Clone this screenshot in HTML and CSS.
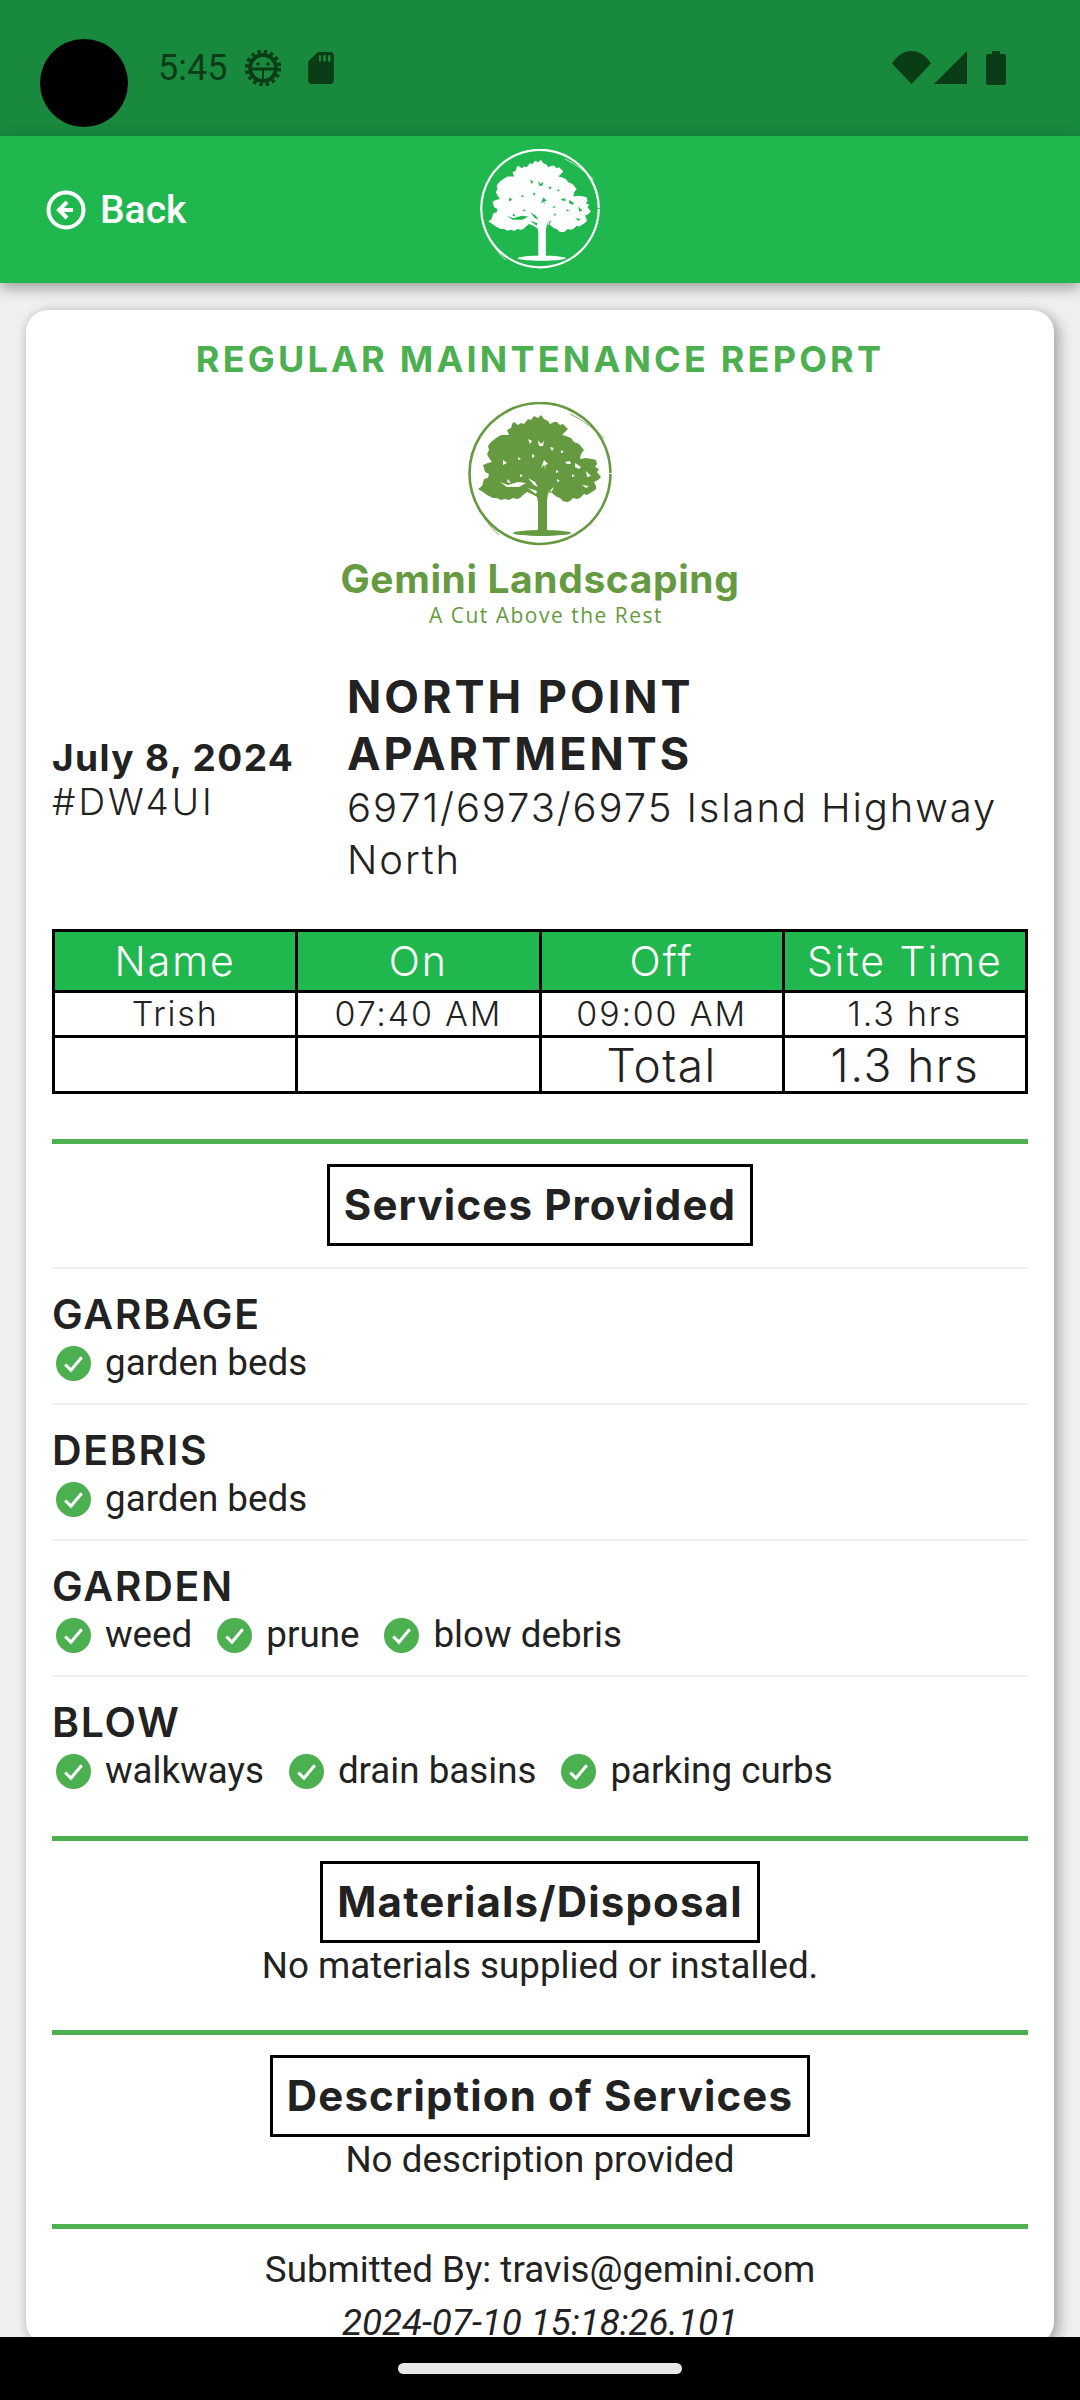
FILE: index.html
```html
<!DOCTYPE html>
<html lang="en">
<head>
    <meta charset="UTF-8">
    <meta name="viewport" content="width=device-width, initial-scale=1.0">
    <title>Regular Maintenance Report</title>
    <link rel="stylesheet" href="styles.css">
</head>
<body>

<svg class="defs" width="0" height="0">
    <defs>
        <symbol id="tree" viewBox="0 0 144 144">
            <path fill-rule="evenodd" d="M46 20L50 23 53 21 56 22 60 17 63 18 66 14 70 16 73 13 76 17 80 19 82 22 86 20 89 20 92 23 95 22 100 27 97 30 94 33 98 34 103 36 106 40 111 42 116 48 113 52 112 57 118 56 124 57 128 58 129 62 127 65 131 67 129 70 133 75 130 78 126 80 128 84 128 87 124 90 119 93 116 92 112 96 109 97 105 96 102 99 99 100 95 99 92 96 89 95 85 92 82 88 80 92 79 98 79 130 70 130 70 100 69 95 64 92 59 90 55 93 52 96 49 97 45 96 41 98 37 97 33 98 29 96 25 96 19 93 15 90 10 87 14 84 16 77 20 76 21 72 17 70 15 63 20 61 24 60 21 56 19 52 21 48 20 44 23 40 28 36 33 33 37 33 41 33 39 28 43 26 44 22zM60 37l4 2-2 3zM70 38l3 4 3-3-1 5-4 0zM82 45l4 1-2 3zM50 55l3 2-3 1zM64 52l3 2-3 2zM76 58l4 4-3 1 1 5-2-5-3 3zM93 48l3 2-3 1zM97 60l5-1 1 3-4 0zM107 61l6 4-2 2-4-2zM35 58l4 3-4 2zM88 68l3 2-3 1zM104 72l3 2-3 1zM118 69l5 5-4 1zM52 72l3 2-3 1zM40 77l3 4-4-1zM60 76l7 4 3 5-4-2zM89 77l3 2-3 1zM114 83l7 1-3 2zM32 80l8 3 10-3 8 1-7 4-12 0zM60 86l9 3-1 3zM80 90l6-5-3 6z"/>
            <ellipse cx="74" cy="131" rx="29" ry="3"/>
            <path fill="none" stroke="currentColor" stroke-width="2.600" d="M142.500 72A70.500 70.500 0 1 1 142.500 71"/>
            <path fill="none" stroke="currentColor" stroke-width=".8" d="M102 12C115 18 126 27 136 36M18 118C22 124 26 129 31 133"/>
        </symbol>
        <symbol id="check" viewBox="0 0 34 34">
            <circle cx="17" cy="17" r="17" fill="#4caf50"/>
            <path d="M9 18l5.500 5.500L25 11" fill="none" stroke="#fff" stroke-width="3"/>
        </symbol>
    </defs>
</svg>

<div class="screen">
    <div class="status-bar">
        <div class="camera"></div>
        <span class="clock">5:45</span>
        <svg class="ic-bug" viewBox="0 0 36 36">
            <circle cx="18" cy="18" r="13" fill="none" stroke="#0a3d16" stroke-width="4"/>
            <circle cx="18" cy="18" r="16.500" fill="none" stroke="#0a3d16" stroke-width="3.500" stroke-dasharray="3.500 3"/>
            <path d="M7 19h22" stroke="#0a3d16" stroke-width="3" fill="none"/>
            <path d="M18 19v11" stroke="#0a3d16" stroke-width="2"/>
            <circle cx="13" cy="14" r="1.800" fill="#0a3d16"/>
            <circle cx="23" cy="14" r="1.800" fill="#0a3d16"/>
        </svg>
        <svg class="ic-sd" viewBox="4 2 16 20"><path fill="#0a3d16" d="M18 2h-8L4.020 8 4 20c0 1.100.9 2 2 2h12c1.100 0 2-.9 2-2V4c0-1.100-.9-2-2-2zm-6 6h-1.200V4H12v4zm3 0h-1.600V4H15v4zm3 0h-1.600V4H18v4z"/></svg>
        <div class="status-right">
            <svg class="ic-wifi" viewBox="0 0 39 33"><path fill="#0a3d16" d="M19.500 33L0 12.500C5 4.500 12 0 19.500 0S34 4.500 39 12.500z"/></svg>
            <svg class="ic-signal" viewBox="0 0 33 33"><path fill="#0a3d16" d="M33 0v33H0z"/></svg>
            <svg class="ic-battery" viewBox="0 0 20 34"><path fill="#0a3d16" d="M6 0h8v3h4a2 2 0 0 1 2 2v27a2 2 0 0 1-2 2H2a2 2 0 0 1-2-2V5a2 2 0 0 1 2-2h4z"/></svg>
        </div>
    </div>

    <header class="top-bar">
        <a class="back">
            <svg class="ic-back" viewBox="0 0 40 40">
                <circle cx="20" cy="20" r="17.500" fill="none" stroke="#fff" stroke-width="4"/>
                <path d="M21 12l-8 8 8 8M14 20h13" fill="none" stroke="#fff" stroke-width="4"/>
            </svg>
            <span>Back</span>
        </a>
        <svg class="head-logo"><use href="#tree"/></svg>
    </header>

    <main class="content">
        <section class="card">
            <h1 class="report-title">REGULAR MAINTENANCE REPORT</h1>

            <div class="brand">
                <svg class="brand-logo"><use href="#tree"/></svg>
                <div class="brand-name">Gemini Landscaping</div>
                <div class="brand-tag">A Cut Above the Rest</div>
            </div>

            <div class="site-info">
                <div class="visit">
                    <div class="visit-date">July 8, 2024</div>
                    <div class="visit-id">#DW4UI</div>
                </div>
                <div class="site">
                    <div class="site-name">NORTH POINT APARTMENTS</div>
                    <div class="site-addr">6971/6973/6975 Island Highway North</div>
                </div>
            </div>

            <table class="times">
                <tr class="times-head">
                    <th>Name</th><th>On</th><th>Off</th><th>Site Time</th>
                </tr>
                <tr class="times-row">
                    <td>Trish</td><td>07:40 AM</td><td>09:00 AM</td><td>1.3 hrs</td>
                </tr>
                <tr class="times-total">
                    <td></td><td></td><td>Total</td><td>1.3 hrs</td>
                </tr>
            </table>

            <div class="section section-services">
                <h2 class="box-title">Services Provided</h2>
            </div>

            <div class="service">
                <h3>GARBAGE</h3>
                <div class="items">
                    <span class="item"><svg class="check"><use href="#check"/></svg>garden beds</span>
                </div>
            </div>
            <div class="service">
                <h3>DEBRIS</h3>
                <div class="items">
                    <span class="item"><svg class="check"><use href="#check"/></svg>garden beds</span>
                </div>
            </div>
            <div class="service">
                <h3>GARDEN</h3>
                <div class="items">
                    <span class="item"><svg class="check"><use href="#check"/></svg>weed</span>
                    <span class="item"><svg class="check"><use href="#check"/></svg>prune</span>
                    <span class="item"><svg class="check"><use href="#check"/></svg>blow debris</span>
                </div>
            </div>
            <div class="service service-last">
                <h3>BLOW</h3>
                <div class="items">
                    <span class="item"><svg class="check"><use href="#check"/></svg>walkways</span>
                    <span class="item"><svg class="check"><use href="#check"/></svg>drain basins</span>
                    <span class="item"><svg class="check"><use href="#check"/></svg>parking curbs</span>
                </div>
            </div>

            <div class="section">
                <h2 class="box-title">Materials/Disposal</h2>
                <p class="note">No materials supplied or installed.</p>
            </div>

            <div class="section">
                <h2 class="box-title">Description of Services</h2>
                <p class="note">No description provided</p>
            </div>

            <div class="section section-foot">
                <p class="note">Submitted By: travis@gemini.com</p>
                <p class="note note-date">2024-07-10 15:18:26.101</p>
            </div>
        </section>
    </main>

    <div class="nav-bar"><div class="nav-pill"></div></div>
</div>

</body>
</html>
```

FILE: styles.css
```css
* {
    box-sizing: border-box;
    margin: 0;
    padding: 0;
}
body {
    font-family: 'Roboto', sans-serif;
    background-color: #f0f0f0;
    color: #222;
}
.defs {
    position: absolute;
}
.screen {
    display: flex;
    flex-direction: column;
    height: 2400px;
    overflow: hidden;
}

/* status bar */
.status-bar {
    display: flex;
    align-items: flex-start;
    flex: 0 0 136px;
    background-color: #19893e;
    color: #0a3d16;
    padding: 39px 74px 0 40px;
}
.camera {
    width: 88px;
    height: 88px;
    border-radius: 50%;
    background-color: #000;
    margin-right: 30px;
}
.clock {
    font-size: 36px;
    line-height: 36px;
    margin-top: 11px;
    width: 87px;
}
.ic-bug {
    width: 36px;
    height: 36px;
    margin-top: 11px;
    margin-right: 27px;
}
.ic-sd {
    width: 26px;
    height: 32px;
    margin-top: 13px;
}
.status-right {
    display: flex;
    margin-left: auto;
    margin-top: 12px;
}
.ic-wifi {
    width: 39px;
    height: 33px;
    margin-right: 3px;
}
.ic-signal {
    width: 33px;
    height: 33px;
    margin-right: 19px;
}
.ic-battery {
    width: 20px;
    height: 34px;
}

/* top bar */
.top-bar {
    display: grid;
    grid-template-columns: 1fr auto 1fr;
    align-items: center;
    flex: 0 0 147px;
    background-color: #20b84e;
    box-shadow: 0 5px 14px rgba(0, 0, 0, 0.35);
    padding: 0 0 0 46px;
    position: relative;
}
.back {
    display: flex;
    align-items: center;
    gap: 14px;
    color: #fff;
    font-size: 39px;
    font-weight: 500;
}
.ic-back {
    width: 40px;
    height: 40px;
}
.head-logo {
    width: 120px;
    height: 120px;
    color: #fff;
    fill: #fff;
    margin-left: -46px;
    margin-bottom: 2px;
}

/* report card */
.content {
    flex: 1;
    overflow: hidden;
    padding: 27px 26px 0;
}
.card {
    background-color: #fff;
    border-radius: 22px;
    box-shadow: 6px 4px 14px rgba(0, 0, 0, 0.28), -2px 0 8px rgba(0, 0, 0, 0.1);
    padding: 28px 26px 0;
}
.report-title {
    font-family: 'Inter', sans-serif;
    font-size: 36px;
    line-height: 42px;
    font-weight: 700;
    color: #4caf50;
    text-align: center;
    letter-spacing: 3.200px;
}
.brand {
    display: flex;
    flex-direction: column;
    align-items: center;
    margin-top: 22px;
    color: #659a41;
}
.brand-logo {
    width: 144px;
    height: 144px;
    fill: #659a41;
}
.brand-name {
    font-family: 'Inter', sans-serif;
    font-size: 39px;
    line-height: 46px;
    font-weight: 700;
    letter-spacing: .6px;
    margin-top: 10px;
}
.brand-tag {
    font-family: 'Open Sans', sans-serif;
    font-size: 21px;
    line-height: 24px;
    letter-spacing: 1.500px;
    margin-top: 1px;
    padding-left: 12px;
}

.site-info {
    display: flex;
    align-items: center;
    margin-top: 41px;
}
.visit {
    flex: 0 0 295px;
    padding-top: 6px;
}
.visit-date {
    font-family: 'Inter', sans-serif;
    font-size: 37px;
    line-height: 44px;
    font-weight: 700;
    letter-spacing: 1.400px;
}
.visit-id {
    font-family: 'Inter', sans-serif;
    font-size: 37px;
    line-height: 44px;
    font-weight: 300;
    letter-spacing: 3px;
}
.site-name {
    font-family: 'Inter', sans-serif;
    font-size: 45px;
    line-height: 57px;
    font-weight: 700;
    letter-spacing: 3px;
}
.site-addr {
    font-family: 'Inter', sans-serif;
    font-size: 40px;
    line-height: 52px;
    font-weight: 300;
    letter-spacing: 1.900px;
}

.times {
    width: 100%;
    table-layout: fixed;
    border-collapse: collapse;
    margin-top: 43px;
    font-family: 'Inter', sans-serif;
    font-weight: 300;
    text-align: center;
}
.times th, .times td {
    border: 3px solid #000;
    padding: 0;
    font-weight: 300;
}
.times-head {
    height: 61px;
    background-color: #20b84e;
    color: #fff;
    font-size: 41px;
    line-height: 50px;
    letter-spacing: 2px;
}
.times-row {
    height: 45px;
    font-size: 34px;
    line-height: 40px;
    letter-spacing: 1.800px;
}
.times-total {
    height: 56px;
    font-size: 46px;
    line-height: 50px;
    letter-spacing: 1.500px;
}

.section {
    display: flex;
    flex-direction: column;
    align-items: center;
    border-top: 5px solid #4caf50;
    margin-top: 43px;
    padding-top: 20px;
}
.section-services {
    padding-bottom: 21px;
    margin-top: 45px;
    border-bottom: 2px solid #eee;
}
.service + .section {
    margin-top: 39px;
}
.box-title {
    font-family: 'Inter', sans-serif;
    font-size: 42px;
    line-height: 76px;
    font-weight: 700;
    letter-spacing: 1.150px;
    border: 3px solid #000;
    padding: 0 14px;
}
.box-title + .note {
    margin-top: 2px;
}
.service {
    height: 136px;
    border-bottom: 2px solid #eee;
    padding-top: 20px;
}
.service-last {
    border-bottom: none;
    height: 120px;
}
.service h3 {
    font-family: 'Inter', sans-serif;
    font-size: 41px;
    line-height: 50px;
    font-weight: 600;
    letter-spacing: 1.700px;
}
.items {
    display: flex;
    gap: 25px;
    padding-left: 4px;
    margin-top: 3px;
}
.item {
    display: flex;
    align-items: center;
    gap: 14px;
    font-size: 36.750px;
    line-height: 42px;
}
.check {
    width: 35px;
    height: 35px;
}
.note {
    font-size: 36.750px;
    line-height: 42px;
    text-align: center;
}
.section-foot {
    padding-top: 20px;
    gap: 11px;
}
.note-date {
    font-style: italic;
}

/* nav bar */
.nav-bar {
    display: flex;
    justify-content: center;
    flex: 0 0 63px;
    background-color: #000;
    padding-top: 26px;
    position: relative;
}
.nav-pill {
    width: 284px;
    height: 11px;
    border-radius: 6px;
    background-color: #e8e8e8;
}
```
